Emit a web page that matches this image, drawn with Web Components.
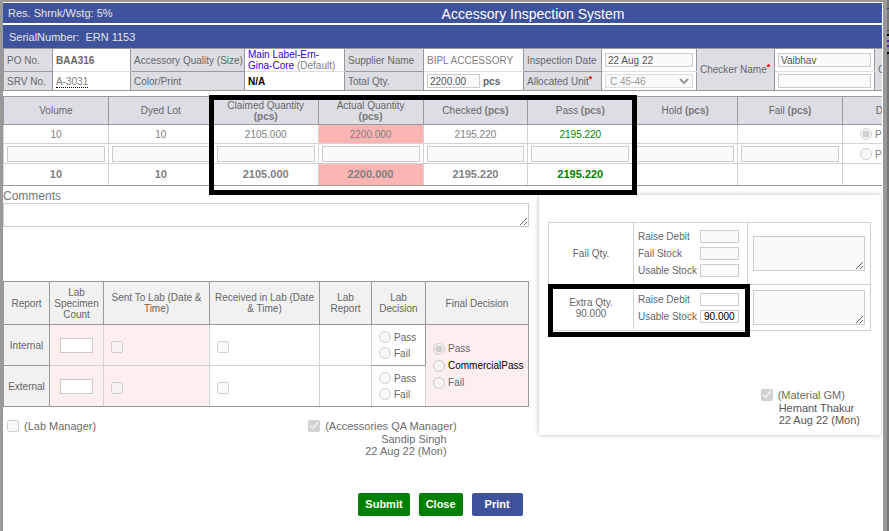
<!DOCTYPE html>
<html lang="en">
<head>
<meta charset="utf-8">
<title>Accessory Inspection System</title>
<style>
  body { margin: 0; background: #fff; font: 10px/11px "Liberation Sans", Arial, sans-serif; color: #666; }
</style>
</head>
<body>
<page-frame>
  <title-bar slot="bar" note="Res. Shrnk/Wstg: 5%">Accessory Inspection System</title-bar>
  <title-bar slot="bar" tall note="SerialNumber:&nbsp; ERN 1153"></title-bar>
  <order-info></order-info>
  <quantity-table></quantity-table>
  <report-layout>
    <comment-box></comment-box>
    <lab-report></lab-report>
    <sign-off slot="sign" label="(Lab Manager)"></sign-off>
    <sign-off slot="sign" label="(Accessories QA Manager)" checked align="end">Sandip Singh<br>22 Aug 22 (Mon)</sign-off>
    <stock-panel slot="side">
      <sign-off label="(Material GM)" checked>Hemant Thakur<br>22 Aug 22 (Mon)</sign-off>
    </stock-panel>
  </report-layout>
  <action-bar>
    <action-button>Submit</action-button>
    <action-button>Close</action-button>
    <action-button tone="blue">Print</action-button>
  </action-bar>
</page-frame>

<script>
const shared = `
  * { box-sizing: border-box; }
  :host { display: block; box-sizing: border-box; }
  table { border-collapse: collapse; table-layout: fixed; width: 100%; }
  th, td { padding: 0 3px; font-weight: normal; border: 1px solid #d3d3d3; }
  input, select, textarea, button { font: inherit; margin: 0; color: #555; }
  input[type=text], textarea { border: 1px solid #ccc; background: #fafafa; border-radius: 0; padding: 0 2px; width: 100%; display: block; outline: 0; }
  input[type=radio], input[type=checkbox] { width: 12px; height: 12px; flex: none; }
  label { display: flex; align-items: center; gap: 4px; }
  a { text-decoration: none; }
`;
function element(name, css, markup, setup) {
  const template = document.createElement('template');
  template.innerHTML = `<style>${shared}${css}</style>${markup}`;
  customElements.define(name, class extends HTMLElement {
    constructor() {
      super();
      this.attachShadow({ mode: 'open' }).append(template.content.cloneNode(true));
    }
    connectedCallback() { if (setup) setup(this, this.shadowRoot); }
  });
}

element('page-frame', `
  :host { display: grid; grid-template-columns: minmax(0, 1fr) 2px; min-height: 100vh; }
  main { border: 0 solid #999; border-width: 2px 4px 0 3px; background: #fff; padding: 1px 1px 0 0; min-width: 0; }
  .clip { overflow: hidden; padding-bottom: 15px; }
  .bars { display: grid; gap: 2px; }
  .behind { background: linear-gradient(#777 8px, #345 8px 9px, #777 9px 30px, #444 30px 31px, #777 31px 34px, #000 34px 36px, #999 36px 40px, #52a 40px 42px, #888 42px 45px, #52a 45px 47px, #888 47px 52px, #000 52px 54px, #777 54px); }
`, `<main><div class="clip"><div class="bars"><slot name="bar"></slot></div><slot></slot></div></main><div class="behind"></div>`);

element('title-bar', `
  :host { display: grid; grid-template-columns: 1fr auto 1fr; align-items: center; height: 20px; padding: 1px 5px 0; background: #3f529c; color: #fff; }
  :host([tall]) { height: 23px; padding-left: 6px; }
  .note { font-size: 11px; color: #e4e6ee; }
  h1 { margin: 0; font-size: 14px; line-height: 18px; font-weight: normal; padding-left: 181px; grid-column: 1 / -1; grid-row: 1; text-align: center; }
  .note { grid-column: 1; grid-row: 1; }
`, `<span class="note"></span><h1><slot></slot></h1>`, (host, root) => {
  root.querySelector('.note').textContent = host.getAttribute('note');
});

element('order-info', `
  table { width: 107.5%; min-width: 945px; }
  th { background: #dddee4; text-align: left; border-color: #999; white-space: nowrap; }
  td { border-color: #999; color: #808080; }
  tr:first-child { height: 23px; } tr + tr { height: 19px; }
  tr:first-child td { border-bottom-color: #ddd; } tr + tr td { border-top-color: #ddd; }
  input[type=text], select { height: 14px; line-height: 12px; }
  select { width: 100%; border: 1px solid #ddd; background: #fafafa; color: #999; border-radius: 0; display: block; padding: 0; opacity: 1; }
  .link { color: #2a00f0; } .plain { color: #808080; }
  .dots { color: #808080; border-bottom: 1px dotted #000; }
  .mark { color: red; font-weight: bold; font-size: 9px; line-height: 6px; vertical-align: 3px; }
  .qty { display: grid; grid-template-columns: 53px auto; gap: 3px; align-items: center; justify-content: start; }
  b { color: #666; } .na { color: #000; }
`, `<table>
  <colgroup><col style="width:49px"><col style="width:78px"><col style="width:114px"><col style="width:100px"><col style="width:79px"><col style="width:100px"><col style="width:78px"><col style="width:95px"><col style="width:78px"><col style="width:100px"><col></colgroup>
  <tr><th>PO No.</th><td><b>BAA316</b></td><th>Accessory Quality (Size)</th>
    <td><a class="link" href="#">Main Label-Ern-Gina-Core</a> <span class="plain">(Default)</span></td>
    <th>Supplier Name</th><td>BIPL ACCESSORY</td>
    <th><label for="date">Inspection Date</label></th><td><input type="text" id="date" value="22 Aug 22"></td>
    <th rowspan="2"><span>Checker Name<span class="mark">*</span></span></th><td><input type="text" aria-label="Checker Name" value="Vaibhav"></td>
    <th rowspan="2">C</th></tr>
  <tr><th>SRV No.</th><td><a class="dots" href="#">A-3031</a></td><th>Color/Print</th><td><b class="na">N/A</b></td>
    <th>Total Qty.</th><td><div class="qty"><input type="text" aria-label="Total Qty." value="2200.00"><b>pcs</b></div></td>
    <th>Allocated Unit<span class="mark">*</span></th><td><select aria-label="Allocated Unit" disabled><option>C 45-46</option></select></td>
    <td><input type="text" aria-label="Second checker name"></td></tr>
</table>`);

element('highlight-box', `
  :host { position: absolute; border: 5px solid #000; pointer-events: none; }
`, ``);

element('quantity-table', `
  :host { margin-top: 5px; position: relative; width: 107.5%; min-width: 945px; }
  th { background: #dddee4; border-color: #999; }
  td { text-align: center; color: #808080; }
  tr:nth-child(1) { height: 28px; } tr:nth-child(2) { height: 19px; } tr:nth-child(3) { height: 20px; }
  tr:nth-child(4) { height: 22px; font-size: 11px; }
  tr:last-child td { border-bottom-color: #999; font-weight: bold; }
  b { color: #777; }
  input[type=text] { height: 16px; }
  .alert { background: #fcb5b2; } td.ok { color: #008000; }
  td label { padding-left: 14px; gap: 3px; align-items: flex-end; }
  highlight-box { left: 21.8%; width: 45.3%; top: -1px; height: 100px; }
`, `<table>
  <tr><th>Volume</th><th>Dyed Lot</th><th>Claimed Quantity <br><b>(pcs)</b></th><th>Actual Quantity <br><b>(pcs)</b></th><th>Checked <b>(pcs)</b></th><th>Pass <b>(pcs)</b></th><th>Hold <b>(pcs)</b></th><th>Fail <b>(pcs)</b></th><th>Decision</th></tr>
  <tr><td>10</td><td>10</td><td>2105.000</td><td class="alert">2200.000</td><td>2195.220</td><td class="ok">2195.220</td><td></td><td></td><td><label><input type="radio" name="d1" checked disabled>Pass</label></td></tr>
  <tr><td><input type="text" aria-label="Volume"></td><td><input type="text" aria-label="Dyed Lot"></td><td><input type="text" aria-label="Claimed Quantity"></td><td><input type="text" aria-label="Actual Quantity"></td><td><input type="text" aria-label="Checked"></td><td><input type="text" aria-label="Pass"></td><td><input type="text" aria-label="Hold"></td><td><input type="text" aria-label="Fail"></td><td><label><input type="radio" name="d2" disabled>Pass</label></td></tr>
  <tr><td>10</td><td>10</td><td>2105.000</td><td class="alert">2200.000</td><td>2195.220</td><td class="ok">2195.220</td><td></td><td></td><td></td></tr>
</table><highlight-box></highlight-box>`);

element('report-layout', `
  :host { display: grid; grid-template-columns: 526fr 342fr; gap: 10px; padding: 4px 1px 0 0; }
  .left { min-width: 0; }
  .signs { display: flex; gap: 212px; padding: 13px 4px 0; }
`, `<div class="left"><slot></slot><div class="signs"><slot name="sign"></slot></div></div><slot name="side"></slot>`);

element('comment-box', `
  label { font-size: 12px; line-height: 13px; color: #777; }
  textarea { height: 24px; background: #fff; }
`, `<label for="c">Comments</label><textarea id="c"></textarea>`);

element('lab-report', `
  :host { margin-top: 54px; }
  th { background: #f1f1f1; border-color: #999; padding: 0 2px; }
  tr { height: 41px; } tr:first-child { height: 43px; }
  td { padding: 0 7px; }
  tr:last-child td { border-bottom-color: #999; }
  .pink { background: #feefef; }
  td.choice { border-color: #999; }
  td.final { border-color: #999; border-left-color: #d3d3d3; }
  .options { display: grid; gap: 4px; } .final .options { gap: 5px; }
  .choice label { align-items: flex-end; line-height: 10px; gap: 3px; }
  .center input { width: 33px; height: 15px; background: #fff; margin: auto; }
  td > input[type=checkbox] { display: block; margin-top: 3px; }
  .final label { gap: 3px; }
  .black { color: #000; }
`, `<table>
  <colgroup><col style="width:46px"><col style="width:54px"><col style="width:106px"><col style="width:110px"><col style="width:52px"><col style="width:54px"><col></colgroup>
  <tr><th>Report</th><th>Lab Specimen Count</th><th>Sent To Lab (Date &amp; Time)</th><th>Received in Lab (Date &amp; Time)</th><th>Lab Report</th><th>Lab Decision</th><th>Final Decision</th></tr>
  <tr><th>Internal</th><td class="pink center"><input type="text" aria-label="Internal specimen count"></td><td class="pink"><input type="checkbox" aria-label="Internal sent" disabled></td><td><input type="checkbox" aria-label="Internal received" disabled></td><td></td>
    <td class="choice"><div class="options"><label><input type="radio" name="i" disabled>Pass</label><label><input type="radio" name="i" disabled>Fail</label></div></td>
    <td class="pink final" rowspan="2"><div class="options"><label><input type="radio" name="f" checked disabled>Pass</label><label class="black"><input type="radio" name="f" disabled>CommercialPass</label><label><input type="radio" name="f" disabled>Fail</label></div></td></tr>
  <tr><th>External</th><td class="pink center"><input type="text" aria-label="External specimen count"></td><td class="pink"><input type="checkbox" aria-label="External sent" disabled></td><td><input type="checkbox" aria-label="External received" disabled></td><td></td>
    <td class="choice"><div class="options"><label><input type="radio" name="e" disabled>Pass</label><label><input type="radio" name="e" disabled>Fail</label></div></td></tr>
</table>`);

element('sign-off', `
  :host { font-size: 11px; line-height: 12px; color: #555; }
  label { gap: 5px; color: #6c6c6c; }
  .who { padding: 1px 0 0 18px; }
  :host([align=end]) .who { text-align: right; padding-right: 10px; color: #6c6c6c; }
`, `<label><input type="checkbox" disabled><span></span></label><div class="who"><slot></slot></div>`, (host, root) => {
  root.querySelector('span').textContent = host.getAttribute('label');
  root.querySelector('input').checked = host.hasAttribute('checked');
});

element('stock-panel', `
  :host { margin-top: 5px; padding: 27px 10px 9px 9px; box-shadow: 0 0 5px #bbb; background: #fff; align-self: start; }
  .grid { position: relative; }
  td { padding: 0 4px; color: #666; }
  td:last-child { padding: 0 5px; }
  tr { height: 62px; } tr + tr { height: 46px; }
  .name { text-align: center; }
  .fields { display: grid; grid-template-columns: 1fr 39px; gap: 4px 0; align-items: center; padding-right: 4px; }
  .fields input[type=text] { height: 13px; line-height: 11px; }
  .open input[type=text] { background: #fff; color: #000; padding: 0 3px; }
  textarea { height: 35px; }
  highlight-box { left: 0; top: 62px; width: 62.5%; height: 53px; }
  .sign { display: flex; justify-content: flex-end; padding: 58px 11px 0 0; }
`, `<div class="grid"><table>
  <colgroup><col style="width:26.4%"><col style="width:35.4%"><col></colgroup>
  <tr><td class="name">Fail Qty.</td><td><div class="fields"><label for="a">Raise Debit</label><input type="text" id="a"><label for="b">Fail Stock</label><input type="text" id="b"><label for="c">Usable Stock</label><input type="text" id="c"></div></td><td><textarea aria-label="Fail remarks"></textarea></td></tr>
  <tr><td class="name">Extra Qty.<br>90.000</td><td><div class="fields open"><label for="d">Raise Debit</label><input type="text" id="d"><label for="e">Usable Stock</label><input type="text" id="e" value="90.000"></div></td><td><textarea aria-label="Extra remarks"></textarea></td></tr>
</table><highlight-box></highlight-box></div><div class="sign"><slot></slot></div>`);

element('action-bar', `
  :host { display: flex; justify-content: center; gap: 9px; padding: 36px 4px 0 0; }
`, `<slot></slot>`);

element('action-button', `
  button { height: 23px; padding: 0 7px; border: 0; border-radius: 2px; background: #008000; color: #fff; font-size: 11px; font-weight: bold; }
  :host([tone=blue]) button { background: #3f529c; padding: 0 13px; }
`, `<button type="button"><slot></slot></button>`);
</script>
</body>
</html>
